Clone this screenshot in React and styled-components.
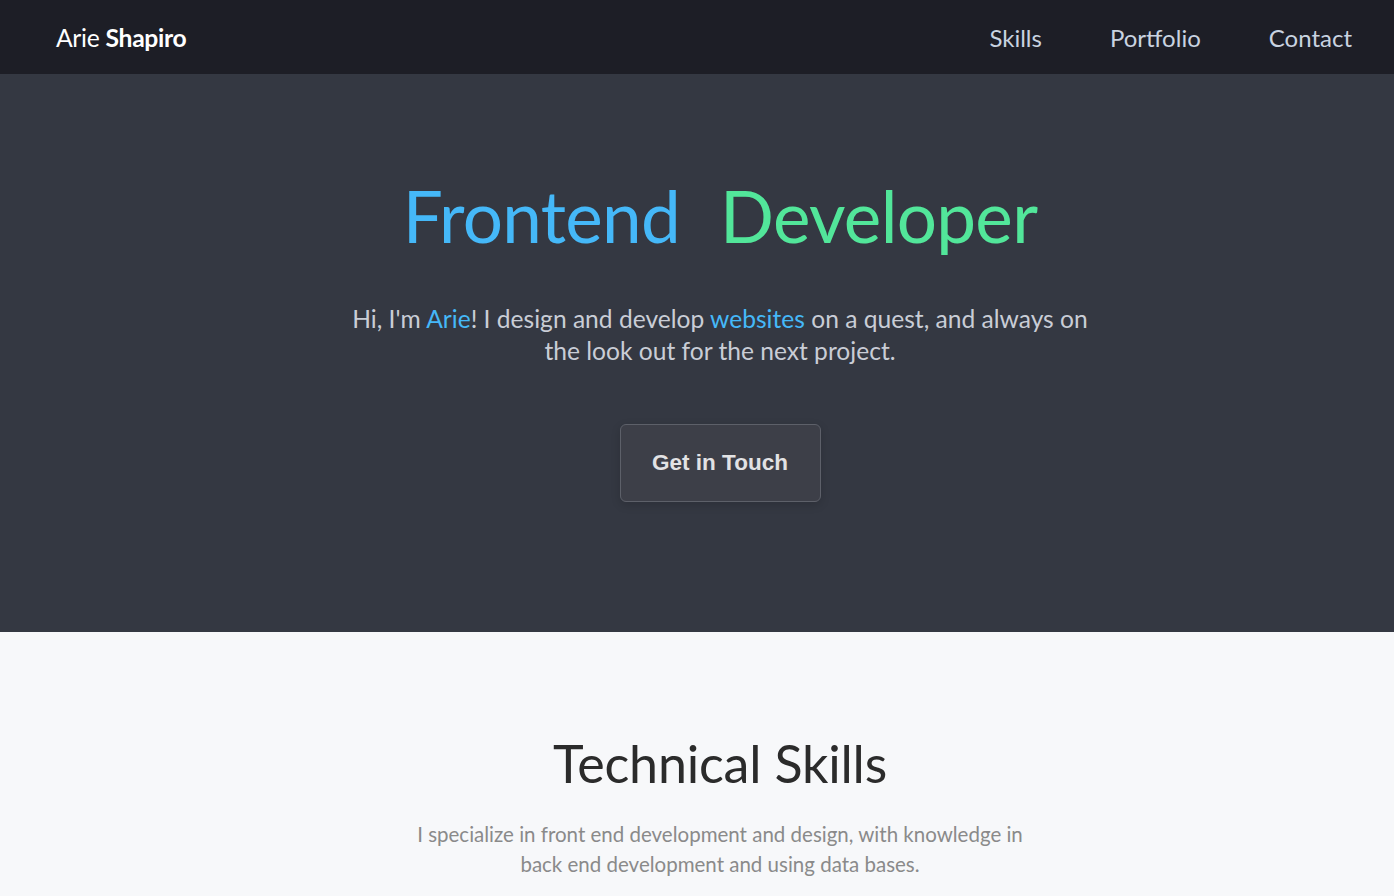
import React from "react";
import styled, { createGlobalStyle } from "styled-components";

const Global = createGlobalStyle`
  html, body { margin: 0; padding: 0; }
  body { font-family: Lato, "Open Sans", sans-serif; background: #f7f8fa; }
  * { box-sizing: border-box; }
`;

const Nav = styled.header`
  height: 74px;
  background: #1d1e26;
  display: flex;
  align-items: center;
  justify-content: space-between;
  padding: 0 42px 0 56px;
`;

const Logo = styled.div`
  color: #ffffff;
  font-size: 24.7px;
  letter-spacing: -0.3px;
  b { font-weight: 700; }
`;

const Links = styled.nav`
  display: flex;
  gap: 68px;
`;

const NavLink = styled.a`
  color: #c9d3e0;
  font-size: 24px;
  text-decoration: none;
`;

const Section = styled.section`
  background: ${(p) => p.$bg};
  display: flex;
  flex-direction: column;
  align-items: center;
  padding-left: 46px;
`;

const Hero = styled(Section)`
  height: 558px;
  padding-top: 99px;
`;

const Title = styled.h1`
  margin: 0;
  font-size: 71px;
  font-weight: 400;
  line-height: 1.2;
  letter-spacing: -0.7px;
  display: flex;
  gap: 40px;
`;

const Word = styled.span`
  color: ${(p) => p.$color};
`;

const Intro = styled.p`
  margin: 45px 0 0;
  width: 760px;
  text-align: center;
  color: #c9cdd6;
  font-size: 24.6px;
  line-height: 32px;
`;

const Hl = styled.span`
  color: #45b8f8;
`;

const Button = styled.button`
  margin-top: 57px;
  width: 201px;
  height: 78px;
  background: #3d3f48;
  border: 1px solid #5d6069;
  border-radius: 6px;
  box-shadow: 0 3px 10px rgba(0, 0, 0, 0.15);
  color: #e2e2e4;
  font-family: "Liberation Sans", Arial, sans-serif;
  font-weight: 700;
  font-size: 22.5px;
`;

const Skills = styled(Section)`
  padding-top: 100px;
`;

const SkillsTitle = styled.h2`
  margin: 0;
  font-size: 52px;
  font-weight: 400;
  color: #2b2b2b;
  line-height: 1.2;
  letter-spacing: -0.2px;
`;

const SkillsText = styled.p`
  margin: 25px 0 0;
  width: 625px;
  text-align: center;
  color: #8a8a8a;
  font-size: 20.5px;
  line-height: 30px;
`;

export default function App() {
  return (
    <>
      <Global />
      <Nav>
        <Logo>
          Arie <b>Shapiro</b>
        </Logo>
        <Links>
          <NavLink href="#skills">Skills</NavLink>
          <NavLink href="#portfolio">Portfolio</NavLink>
          <NavLink href="#contact">Contact</NavLink>
        </Links>
      </Nav>
      <Hero $bg="#343842">
        <Title>
          <Word $color="#45b8f8">Frontend</Word>
          <Word $color="#52e69a">Developer</Word>
        </Title>
        <Intro>
          Hi, I'm <Hl>Arie</Hl>! I design and develop <Hl>websites</Hl> on a quest, and always on the look out for the next project.
        </Intro>
        <Button>Get in Touch</Button>
      </Hero>
      <Skills $bg="#f7f8fa">
        <SkillsTitle>Technical Skills</SkillsTitle>
        <SkillsText>
          I specialize in front end development and design, with knowledge in back end development and using data bases.
        </SkillsText>
      </Skills>
    </>
  );
}
